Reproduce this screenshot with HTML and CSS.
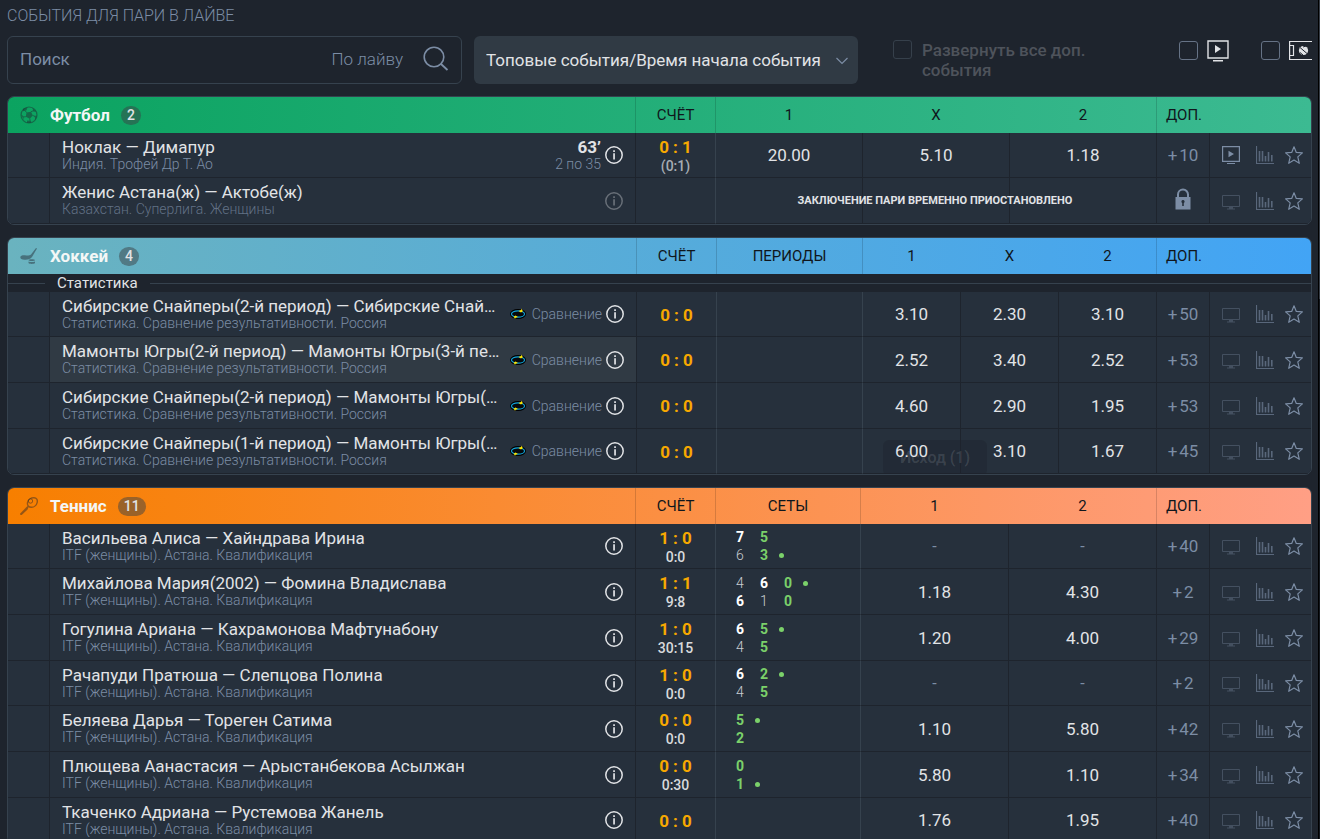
FILE: index.html
```
<!DOCTYPE html>
<html lang="ru">
  <head>
    <meta charset="UTF-8" />
    <meta name="viewport" content="width=device-width, initial-scale=1.0" />
    <title>События для пари в лайве</title>
    <link rel="stylesheet" href="styles.css" />
  </head>

  <body>
    <svg class="sprite" aria-hidden="true">
      <symbol id="icon-info" viewBox="0 0 18 18">
        <circle cx="9" cy="9" r="8.2" fill="none" stroke="currentColor" stroke-width="1.5" />
        <path d="M8.2 4.2h1.700v1.700H8.2zM8.2 7.2h1.700v6.200H8.2z" fill="currentColor" />
      </symbol>
      <symbol id="icon-tv" viewBox="0 0 18 18">
        <path d="M.5 3.5h17v11H.5z" fill="none" stroke="currentColor" />
        <path d="M7 15h4v1.5h2v1H5v-1h2z" fill="currentColor" />
      </symbol>
      <symbol id="icon-video" viewBox="0 0 18 18">
        <path d="M.6.6h16.8v14.8H.6z" fill="none" stroke="currentColor" stroke-width="1.2" />
        <path d="M6.5 4.8v6.4L12 8zM5 17h8v1H5z" fill="currentColor" />
      </symbol>
      <symbol id="icon-stats" viewBox="0 0 18 18">
        <path d="M.5 0v17.500H18" fill="none" stroke="currentColor" stroke-width="1.200" />
        <path d="M3.500 5v10.500M6.500 5v10.500M9.500 10v5.500M12.500 6v9.500M15.800 9v6.500" fill="none" stroke="currentColor" stroke-width="1.600" />
      </symbol>
      <symbol id="icon-star" viewBox="0 0 18 18">
        <path d="M9 .8l2.300 5.600 6.100.5-4.600 4 1.500 6.400L9 14l-5.300 3.300 1.500-6.400L.6 6.900l6.100-.5z" fill="none" stroke="currentColor" stroke-width="1.200" stroke-linejoin="round" />
      </symbol>
      <symbol id="icon-lock" viewBox="0 0 16 22">
        <path d="M3 9V6.500a5 5 0 0 1 10 0V9" fill="none" stroke="currentColor" stroke-width="2" />
        <path d="M.5 9h15v12.500H.5zM8 12a1.600 1.600 0 0 0-.8 3v3h1.600v-3A1.600 1.600 0 0 0 8 12z" fill="currentColor" fill-rule="evenodd" />
      </symbol>
      <symbol id="icon-orbit" viewBox="0 0 16 12">
        <ellipse cx="8" cy="6" rx="7" ry="4" fill="#06090c" stroke="#000" stroke-width="2" />
        <ellipse cx="8" cy="6" rx="6.500" ry="3.200" fill="none" stroke="#12a5dc" stroke-width="1.200" />
        <path d="M8.500 3l2.500-1 .5-1.500.5 1.500 1 1-2 1.500zM3.500 9l2-1.500L8 9l-2.500.8L5 11l-.5-1.200z" fill="#ffe600" />
      </symbol>
      <symbol id="icon-football" viewBox="0 0 18 18">
        <circle cx="9" cy="9" r="8" fill="none" stroke="currentColor" stroke-width="1.200" />
        <path d="M6.500 6.500l4.500-.8 1.800 3.800-3 3.200-4-2zM3 2.800l4.500-1.200-1 2.600-3.500 1zM12.500 2l3.500 3.500-2.500.3zM1.200 8.500l2 1.500.5 4zM7 14.500l4.500.5-1 2-3.500-.3zM14.500 10l2.200-.6-1.200 4.600z" fill="currentColor" />
        <path d="M6.500 6.500L5 4.500M11 5.700l2.500-1M12.800 9.500l2.200.8M9.800 12.700l.3 2.500M5.800 10.700L3 11" fill="none" stroke="currentColor" />
      </symbol>
      <symbol id="icon-hockey" viewBox="0 0 18 18">
        <path d="M17 1.500L12 10c-1.500 1.800-3.500 2.600-6.500 2.800C1.800 13 .2 12 .3 10.200.5 8.500 3 8 5 8.300c2.500.5 4.800.3 6-.8L16 1z" fill="currentColor" />
        <path d="M8.500 13.200c0-1.200 6.500-1.200 6.500 0 0 1-6.500 1-6.500 0zM8.500 14.400c1.500.9 5 .9 6.500 0v1.600c-1 1.200-5.500 1.200-6.500 0z" fill="currentColor" />
      </symbol>
      <symbol id="icon-tennis" viewBox="0 0 18 18">
        <path d="M7.500 5.500C8 2.500 11 .7 14 .8c2.500.2 3.800 2 3.200 4.500-.6 2.700-3 5-5.700 5-3 0-4.400-2-4-4.800zM8 9.500L7 12l-5.800 5.500L.7 17l5.800-6z" fill="none" stroke="currentColor" stroke-width="1.400" />
        <circle cx="10.500" cy="4" r="2.200" fill="none" stroke="currentColor" />
      </symbol>
    </svg>

    <main class="live">
      <h1 class="live-title">СОБЫТИЯ ДЛЯ ПАРИ В ЛАЙВЕ</h1>

      <form class="toolbar">
        <div class="search">
          <input type="text" class="search-input" placeholder="Поиск" aria-label="Поиск" />
          <button type="button" class="search-scope">По лайву</button>
          <button type="button" class="search-btn" aria-label="Найти">
            <svg viewBox="0 0 26 26">
              <circle cx="11" cy="11" r="9.800" fill="none" stroke="currentColor" stroke-width="1.600" />
              <path d="M18 18l6.500 6" stroke="currentColor" stroke-width="1.800" />
            </svg>
          </button>
        </div>

        <div class="sort">
          <select class="sort-select" aria-label="Сортировка">
            <option>Топовые события/Время начала события</option>
          </select>
          <svg class="sort-arrow" viewBox="0 0 12 8">
            <path d="M.5 1L6 6.500 11.500 1" fill="none" stroke="currentColor" stroke-width="1.200" />
          </svg>
        </div>

        <label class="expand">
          <input type="checkbox" class="box" disabled />
          <span>Развернуть все доп. события</span>
        </label>

        <div class="filters">
          <label class="filter">
            <input type="checkbox" class="box" aria-label="С трансляцией" />
            <svg class="filter-icon" viewBox="0 0 22 22">
              <path d="M1 1h20v17H1z" fill="none" stroke="currentColor" stroke-width="1.400" />
              <path d="M8 5v8l6-4zM6 20h10v1.400H6z" fill="currentColor" />
            </svg>
          </label>
          <label class="filter">
            <input type="checkbox" class="box" aria-label="С матч-центром" />
            <svg class="filter-icon filter-field" viewBox="0 0 23 22">
              <path d="M23 1.500H.6v18H23M.6 5.500H4.500v10H.6" fill="none" stroke="currentColor" stroke-width="1.200" />
              <circle cx="14.500" cy="10.500" r="4.600" fill="currentColor" />
              <path d="M11 7.500l7 6M14 7l3-1M11 12.500l3 2.500" stroke="#1e242d" fill="none" />
            </svg>
          </label>
        </div>
      </form>

      <div id="sports"></div>
    </main>

    <div class="scroll-track">
      <div class="scroll-thumb"></div>
    </div>

    <script src="events.js"></script>
  </body>
</html>
```
FILE: styles.css
```
* {
  box-sizing: border-box;
}

body {
  display: flex;
  height: 100vh;
  margin: 0;
  overflow: hidden;
  background-color: #1e242d;
  color: #e1e3e6;
  font-family: Roboto, "Liberation Sans", sans-serif;
  font-size: 17px;
}

button,
input,
select {
  font: inherit;
  color: inherit;
}

button {
  padding: 0;
  border: 0;
  background: none;
  cursor: pointer;
}

svg {
  display: block;
}

.sprite {
  position: absolute;
  width: 0;
  height: 0;
}

.live {
  flex: 1;
  min-width: 0;
  padding: 4px 6px 0 7px;
  overflow: hidden;
}

.live-title {
  margin: 0 0 9px;
  color: #7c8da5;
  font-size: 16px;
  font-weight: 300;
  line-height: 23px;
}

/* toolbar */
.toolbar {
  display: flex;
  align-items: flex-start;
  height: 60px;
}

.search {
  display: flex;
  flex: 0 1 455px;
  align-items: center;
  height: 48px;
  padding: 0 12px 2px;
  border: 1px solid #36424e;
  border-radius: 6px;
  color: #7c8da5;
}

.search-input {
  flex: 1;
  min-width: 0;
  padding: 0;
  border: 0;
  outline: 0;
  background: none;
}

.search-input::placeholder {
  color: #7c8da5;
}

.search-scope {
  margin-right: 20px;
  font-weight: 300;
}

.search-btn svg {
  width: 26px;
  height: 26px;
}

.sort {
  position: relative;
  flex: 0 1 384px;
  margin-left: 12px;
}

.sort-select {
  width: 100%;
  height: 48px;
  padding: 0 28px 0 12px;
  border: 0;
  border-radius: 6px;
  appearance: none;
  background-color: #303a44;
}

.sort-arrow {
  position: absolute;
  top: 21px;
  right: 10px;
  width: 12px;
  height: 8px;
  color: #7c8da5;
  pointer-events: none;
}

.box {
  flex: none;
  width: 19px;
  height: 19px;
  margin: 0;
  border: 1px solid #667386;
  border-radius: 3px;
  appearance: none;
}

.expand {
  display: flex;
  gap: 10px;
  width: 210px;
  margin: 4px 0 0 35px;
  color: #4e535b;
  font-weight: 500;
  line-height: 20px;
}

.expand .box {
  border-color: #36404b;
}

.filters {
  display: flex;
  gap: 32px;
  margin-left: auto;
}

.filter {
  display: flex;
  gap: 9px;
  margin-top: 4px;
}

.filter .box {
  margin-top: 1px;
}

.filter-icon {
  width: 22px;
  height: 22px;
}

.filter-field {
  width: 23px;
}

/* sport blocks */
.sport {
  margin-bottom: 12px;
  border: 1px solid #36424e;
  border-radius: 7px;
  overflow: hidden;
}

.events {
  width: 100%;
  table-layout: fixed;
  border-collapse: separate;
  border-spacing: 0;
}

.events th,
.events td {
  padding: 0;
}

.col-gutter { width: 42px; }
.col-score { width: 80px; }
.col-periods { width: 145px; }
.col-odd3 { width: 147px; }
.col-odd4 { width: 98px; }
.col-odd2 { width: 148px; }
.col-more { width: 53px; }
.col-links { width: 101px; }

.football .head { background: linear-gradient(90deg, #0ba360, #3cba92); }
.hockey .head { background: linear-gradient(90deg, #6ab3bf, #42a4f5); }
.tennis .head { background: linear-gradient(90deg, #f77f00, #ff9f85); }

.hockey .col-periods { width: 146px; }

.head th {
  height: 36px;
  border-right: 1px solid transparent;
  color: #10161c;
  font-size: 15px;
  font-weight: 400;
}

.head .sport-cell,
.head .line {
  border-right-color: rgba(0, 0, 0, 0.15);
}

.head .more-cell {
  padding-left: 9px;
  text-align: left;
}

.sport-name {
  display: flex;
  align-items: center;
  padding-left: 12px;
}

.sport-icon {
  width: 18px;
  height: 18px;
  margin-right: 12px;
  color: rgba(30, 36, 45, 0.45);
}

.sport-link {
  color: #f4f7f6;
  font-size: 17px;
  font-weight: 700;
  text-decoration: none;
}

.count {
  min-width: 20px;
  height: 19px;
  margin-left: 11px;
  padding: 0 6px;
  border-radius: 10px;
  background-color: rgba(60, 65, 70, 0.5);
  color: #e1e3e6;
  font-size: 14px;
  font-weight: 500;
  line-height: 19px;
  text-align: center;
}

.group {
  display: flex;
  align-items: center;
  height: 18px;
  gap: 12px;
  background-color: #1e242d;
  font-size: 15px;
  font-weight: 400;
}

.group::before,
.group::after {
  flex: 1;
  height: 1px;
  background-color: #36424e;
  content: "";
}

.group::before {
  flex: 0 0 37px;
}

.events .group-cell {
  height: 18px;
}

.row td {
  height: 46px;
  border-right: 1px solid #1e242d;
  border-bottom: 1px solid #1e242d;
  background-color: #26303c;
  text-align: center;
}

.row:nth-child(3n + 1) td {
  height: 45px;
}

.row .line {
  border-right-color: #36424e;
}

.row .score-cell {
  padding-top: 2px;
}

.row td:last-child {
  border-right: 0;
}

.row .active {
  background-color: #303a44;
}

.event {
  display: flex;
  align-items: center;
  padding: 0 12px;
  text-align: left;
}

.event-text {
  flex: 1;
  min-width: 0;
  padding-bottom: 1px;
}

.event-link,
.league {
  display: block;
  overflow: hidden;
  text-overflow: ellipsis;
  white-space: nowrap;
}

.event-link {
  color: #e1e3e6;
  line-height: 18px;
  text-decoration: none;
}

.league,
.time-part,
.compare {
  color: #7c8da5;
  font-size: 14px;
  font-weight: 300;
  line-height: 16px;
}

.time {
  margin-right: 4px;
  font-weight: 700;
  line-height: 18px;
  text-align: right;
}

.time-part {
  display: block;
}

.compare {
  display: flex;
  align-items: center;
  gap: 6px;
  margin: 0 4px 0 5px;
}

.compare svg {
  width: 16px;
  height: 12px;
}

.icon {
  width: 18px;
  height: 18px;
}

.paused .info,
.links .dim {
  opacity: 0.35;
}

.paused .league {
  opacity: 0.7;
}

.score {
  color: #f7a800;
  font-weight: 700;
  line-height: 19px;
}

.subscore {
  color: #d8dadd;
  font-size: 14px;
  font-weight: 500;
  line-height: 18px;
}

.subscore.muted {
  color: #a7adb5;
}

.sets {
  display: grid;
  grid-template-columns: repeat(4, 24px);
  padding-left: 12px;
  font-size: 14px;
  line-height: 18px;
}

.won {
  color: #ffffff;
  font-weight: 700;
}

.lost {
  color: #c9cdd2;
  font-weight: 300;
}

.now {
  color: #7bd16a;
  font-weight: 700;
}

.serve {
  width: 5px;
  height: 5px;
  margin: 7px 0 0 3px;
  border-radius: 50%;
  background-color: #7bd16a;
}

.no-odd {
  color: #7c8da5;
  font-size: 16px;
}

.more-btn {
  color: #7c8da5;
}

.more-btn svg {
  width: 16px;
  height: 22px;
  margin: 0 auto;
}

.stopped {
  position: relative;
}

/* the notice runs over all odds columns */
.notice {
  position: absolute;
  top: 0;
  left: 0;
  width: 300%;
  color: #e1e3e6;
  font-size: 11px;
  font-weight: 700;
  line-height: 46px;
}

.links {
  display: flex;
  align-items: center;
  padding-left: 12px;
  color: #7c8da5;
}

.links button + button {
  margin-left: 16px;
}

.links button:last-child {
  margin-left: 11px;
}

.links .stats {
  opacity: 0.6;
}

.has-hint {
  position: relative;
}

.has-hint button {
  position: relative;
  z-index: 2;
}

.hint {
  position: absolute;
  top: 11px;
  left: 20px;
  z-index: 1;
  width: 104px;
  height: 36px;
  border-radius: 6px;
  background-color: rgba(30, 36, 45, 0.4);
  color: rgba(225, 227, 230, 0.15);
  font-size: 16px;
  font-weight: 500;
  line-height: 36px;
  pointer-events: none;
}

.scroll-track {
  width: 2px;
  border-left: 1px solid #000000;
  background-color: #14181e;
}

.scroll-thumb {
  height: 299px;
  background-color: #363c45;
}
```
FILE: events.js
```
const compare = "Статистика. Сравнение результативности. Россия";
const itf = "ITF (женщины). Астана. Квалификация";

const sports = [
  {
    id: "football",
    name: "Футбол",
    count: 2,
    outcomes: ["1", "X", "2"],
    oddCol: "col-odd3",
    events: [
      { name: "Ноклак — Димапур", league: "Индия. Трофей Др Т. Ао", time: "63’", part: "2 по 35", score: "0 : 1", sub: "(0:1)", muted: true, odds: ["20.00", "5.10", "1.18"], more: 10, video: true },
      { name: "Женис Астана(ж) — Актобе(ж)", league: "Казахстан. Суперлига. Женщины", paused: true, odds: ["", "", ""] },
    ],
  },
  {
    id: "hockey",
    name: "Хоккей",
    count: 4,
    periods: "ПЕРИОДЫ",
    group: "Статистика",
    outcomes: ["1", "X", "2"],
    oddCol: "col-odd4",
    events: [
      { name: "Сибирские Снайперы(2-й период) — Сибирские Снайперы(3-й период)", league: compare, compare: true, score: "0 : 0", odds: ["3.10", "2.30", "3.10"], more: 50 },
      { name: "Мамонты Югры(2-й период) — Мамонты Югры(3-й период)", league: compare, compare: true, active: true, score: "0 : 0", odds: ["2.52", "3.40", "2.52"], more: 53 },
      { name: "Сибирские Снайперы(2-й период) — Мамонты Югры(2-й период)", league: compare, compare: true, score: "0 : 0", odds: ["4.60", "2.90", "1.95"], more: 53 },
      { name: "Сибирские Снайперы(1-й период) — Мамонты Югры(1-й период)", league: compare, compare: true, score: "0 : 0", odds: ["6.00", "3.10", "1.67"], more: 45, hint: "Исход (1)" },
    ],
  },
  {
    id: "tennis",
    name: "Теннис",
    count: 11,
    periods: "СЕТЫ",
    outcomes: ["1", "2"],
    oddCol: "col-odd2",
    // sets: two rows of games, the last set is being played; serve is the row of the server
    events: [
      { name: "Васильева Алиса — Хайндрава Ирина", league: itf, score: "1 : 0", sub: "0:0", sets: [[7, 5], [6, 3]], serve: 1, odds: ["-", "-"], more: 40 },
      { name: "Михайлова Мария(2002) — Фомина Владислава", league: itf, score: "1 : 1", sub: "9:8", sets: [[4, 6, 0], [6, 1, 0]], serve: 0, odds: ["1.18", "4.30"], more: 2 },
      { name: "Гогулина Ариана — Кахрамонова Мафтунабону", league: itf, score: "1 : 0", sub: "30:15", sets: [[6, 5], [4, 5]], serve: 0, odds: ["1.20", "4.00"], more: 29 },
      { name: "Рачапуди Пратюша — Слепцова Полина", league: itf, score: "1 : 0", sub: "0:0", sets: [[6, 2], [4, 5]], serve: 0, odds: ["-", "-"], more: 2 },
      { name: "Беляева Дарья — Тореген Сатима", league: itf, score: "0 : 0", sub: "0:0", sets: [[5], [2]], serve: 0, odds: ["1.10", "5.80"], more: 42 },
      { name: "Плющева Аанастасия — Арыстанбекова Асылжан", league: itf, score: "0 : 0", sub: "0:30", sets: [[0], [1]], serve: 1, odds: ["5.80", "1.10"], more: 34 },
      { name: "Ткаченко Адриана — Рустемова Жанель", league: itf, score: "0 : 0", odds: ["1.76", "1.95"], more: 40 },
    ],
  },
];

function icon(name, cls = "icon") {
  return `<svg class="${cls}" aria-hidden="true"><use href="#icon-${name}" /></svg>`;
}

function renderSets(event) {
  if (!event.sets) return "";
  const last = event.sets[0].length - 1;
  const cells = event.sets.map((games, side) => {
    const other = event.sets[1 - side];
    const numbers = games.map((value, i) => {
      const cls = i === last ? "now" : value > other[i] ? "won" : "lost";
      return `<span class="${cls}">${value}</span>`;
    });
    numbers.push(event.serve === side ? `<span class="serve"></span>` : "<span></span>");
    while (numbers.length < 4) numbers.push("<span></span>");
    return numbers.join("");
  });
  return `<div class="sets">${cells.join("")}</div>`;
}

function renderOdd(event, odd, i) {
  if (event.paused) {
    return i === 0
      ? `<td class="stopped"><div class="notice">ЗАКЛЮЧЕНИЕ ПАРИ ВРЕМЕННО ПРИОСТАНОВЛЕНО</div></td>`
      : "<td></td>";
  }
  if (odd === "-") return `<td class="no-odd">-</td>`;
  if (event.hint && i === 0) {
    return `<td class="has-hint"><button type="button">${odd}</button><div class="hint">${event.hint}</div></td>`;
  }
  return `<td><button type="button">${odd}</button></td>`;
}

function renderEvent(event, sport) {
  return `
    <tr class="row ${event.paused ? "paused" : ""}">
      <td></td>
      <td class="${event.active ? "active" : ""}">
        <div class="event">
          <div class="event-text">
            <a class="event-link" href="#">${event.name}</a>
            <span class="league">${event.league}</span>
          </div>
          ${event.time ? `<div class="time">${event.time}<span class="time-part">${event.part}</span></div>` : ""}
          ${event.compare ? `<div class="compare">${icon("orbit", "orbit")}Сравнение</div>` : ""}
          <button type="button" class="info" aria-label="Информация">${icon("info")}</button>
        </div>
      </td>
      <td class="line score-cell">
        ${event.score ? `<div class="score">${event.score}</div>` : ""}
        ${event.sub ? `<div class="subscore ${event.muted ? "muted" : ""}">${event.sub}</div>` : ""}
      </td>
      ${sport.periods ? `<td class="line">${renderSets(event)}</td>` : ""}
      ${event.odds.map((odd, i) => renderOdd(event, odd, i)).join("")}
      <td>
        ${
          event.paused
            ? `<button type="button" class="more-btn" aria-label="Закрыто">${icon("lock")}</button>`
            : `<button type="button" class="more-btn">+&#8202;${event.more}</button>`
        }
      </td>
      <td>
        <div class="links">
          <button type="button" class="${event.video ? "" : "dim"}" aria-label="Трансляция">${icon(event.video ? "video" : "tv")}</button>
          <button type="button" class="stats" aria-label="Статистика">${icon("stats")}</button>
          <button type="button" aria-label="В избранное">${icon("star")}</button>
        </div>
      </td>
    </tr>`;
}

function renderSport(sport) {
  const columns = 5 + sport.outcomes.length + (sport.periods ? 1 : 0);
  const last = sport.outcomes.length - 1;
  return `
    <section class="sport ${sport.id}">
      <table class="events">
        <colgroup>
          <col class="col-gutter" />
          <col />
          <col class="col-score" />
          ${sport.periods ? `<col class="col-periods" />` : ""}
          ${sport.outcomes.map(() => `<col class="${sport.oddCol}" />`).join("")}
          <col class="col-more" />
          <col class="col-links" />
        </colgroup>
        <thead>
          <tr class="head">
            <th class="sport-cell" colspan="2">
              <div class="sport-name">
                ${icon(sport.id, "sport-icon")}
                <a class="sport-link" href="#">${sport.name}</a>
                <span class="count">${sport.count}</span>
              </div>
            </th>
            <th class="line">СЧЁТ</th>
            ${sport.periods ? `<th class="line">${sport.periods}</th>` : ""}
            ${sport.outcomes.map((o, i) => `<th class="${i === last ? "line" : ""}">${o}</th>`).join("")}
            <th class="more-cell" colspan="2">ДОП.</th>
          </tr>
          ${sport.group ? `<tr><th class="group-cell" colspan="${columns}"><div class="group">${sport.group}</div></th></tr>` : ""}
        </thead>
        <tbody>
          ${sport.events.map((event) => renderEvent(event, sport)).join("")}
        </tbody>
      </table>
    </section>`;
}

document.getElementById("sports").innerHTML = sports.map(renderSport).join("");
```
